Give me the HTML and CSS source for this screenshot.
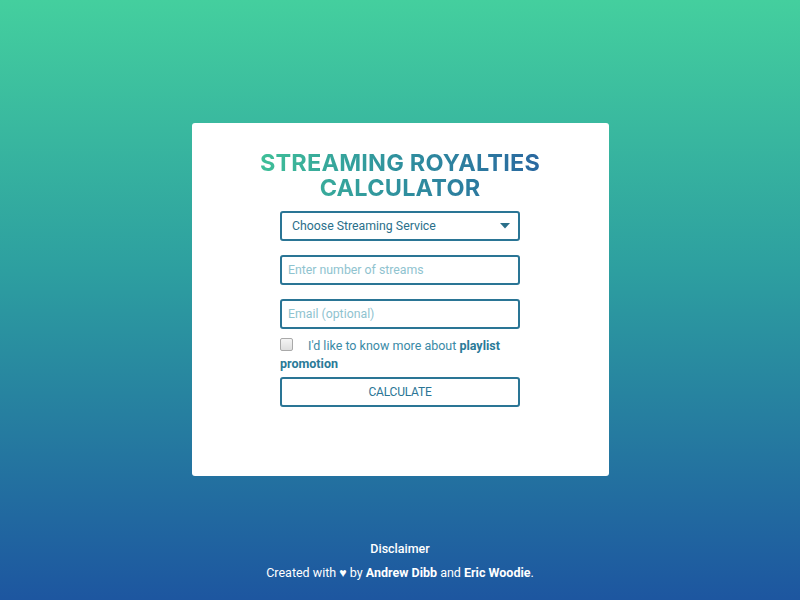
FILE: index.html
```html
<!DOCTYPE html>
<html>
<head>
<meta charset="utf-8">
<link rel="stylesheet" href="styles.css">
</head>
<body>
<main class="page">
  <section class="card">
    <h1 class="title">STREAMING ROYALTIES<br>CALCULATOR</h1>
    <form class="form">
      <div class="select">
        <span>Choose Streaming Service</span>
        <svg class="caret" width="10" height="6" viewBox="0 0 10 6"><path d="M0 0 L10 0 L5 5.5 Z" fill="#2a6f8a"/></svg>
      </div>
      <input class="field" type="text" placeholder="Enter number of streams">
      <input class="field" type="text" placeholder="Email (optional)">
      <label class="check">
        <span class="box"></span><span class="check-text">I'd like to know more about <b>playlist promotion</b></span>
      </label>
      <button class="btn" type="button">CALCULATE</button>
    </form>
  </section>
  <footer class="footer">
    <p class="disclaimer">Disclaimer</p>
    <p class="credits">Created with ♥ by <b>Andrew Dibb</b> and <b>Eric Woodie</b>.</p>
  </footer>
</main>
</body>
</html>
```

FILE: styles.css
```css
html, body {
  margin: 0;
  padding: 0;
}
body {
  width: 800px;
  height: 600px;
  background: linear-gradient(to bottom, #44cf9e 0%, #2d9fa0 45%, #1d56a0 100%);
  font-family: Roboto, "Liberation Sans", sans-serif;
  overflow: hidden;
}
.page {
  display: flex;
  flex-direction: column;
  align-items: center;
  padding-top: 123px;
}
.card {
  width: 417px;
  height: 353px;
  box-sizing: border-box;
  background: #fff;
  border-radius: 3px;
  padding-top: 27px;
  display: flex;
  flex-direction: column;
  align-items: center;
}
.title {
  margin: 0;
  font-family: Inter, "Open Sans", sans-serif;
  font-weight: 700;
  font-size: 23.5px;
  line-height: 25px;
  letter-spacing: 0.2px;
  text-align: center;
  background: linear-gradient(to right, #3fbf98 0%, #2f909e 50%, #2a68a0 100%);
  -webkit-background-clip: text;
  background-clip: text;
  color: transparent;
}
.form {
  width: 240px;
  margin-top: 11px;
  display: flex;
  flex-direction: column;
}
.select, .field, .btn {
  box-sizing: border-box;
  width: 240px;
  height: 30px;
  border: 2px solid #2a7595;
  border-radius: 3px;
  background: #fff;
  font-family: Roboto, "Liberation Sans", sans-serif;
  font-size: 12.3px;
}
.select {
  display: flex;
  align-items: center;
  justify-content: space-between;
  padding: 0 8px 0 10px;
  color: #2a6f8a;
}
.field {
  margin-top: 14px;
  padding: 0 6px;
  color: #2a6f8a;
  outline: none;
}
.field::placeholder {
  color: #8fc3cf;
}
.check {
  margin-top: 8px;
  font-size: 12.5px;
  line-height: 17.5px;
  color: #3a8aa6;
  display: block;
}
.box {
  display: inline-block;
  width: 11px;
  height: 11px;
  border: 1px solid #a9a9a9;
  border-radius: 2px;
  background: linear-gradient(#f4f4f4, #dedede);
  vertical-align: -1px;
  margin-right: 15px;
}
.check b {
  color: #2a7a98;
  font-weight: 700;
}
.btn {
  margin-top: 5px;
  color: #2a7595;
  text-align: center;
  font-size: 12px;
  letter-spacing: -0.2px;
}
.footer {
  margin-top: 61px;
  text-align: center;
  color: #fff;
  font-size: 12.5px;
}
.footer p {
  margin: 0;
}
.disclaimer {
  font-weight: 500;
  line-height: 24px;
}
.credits {
  line-height: 24px;
}
.credits b {
  font-weight: 700;
}
```
